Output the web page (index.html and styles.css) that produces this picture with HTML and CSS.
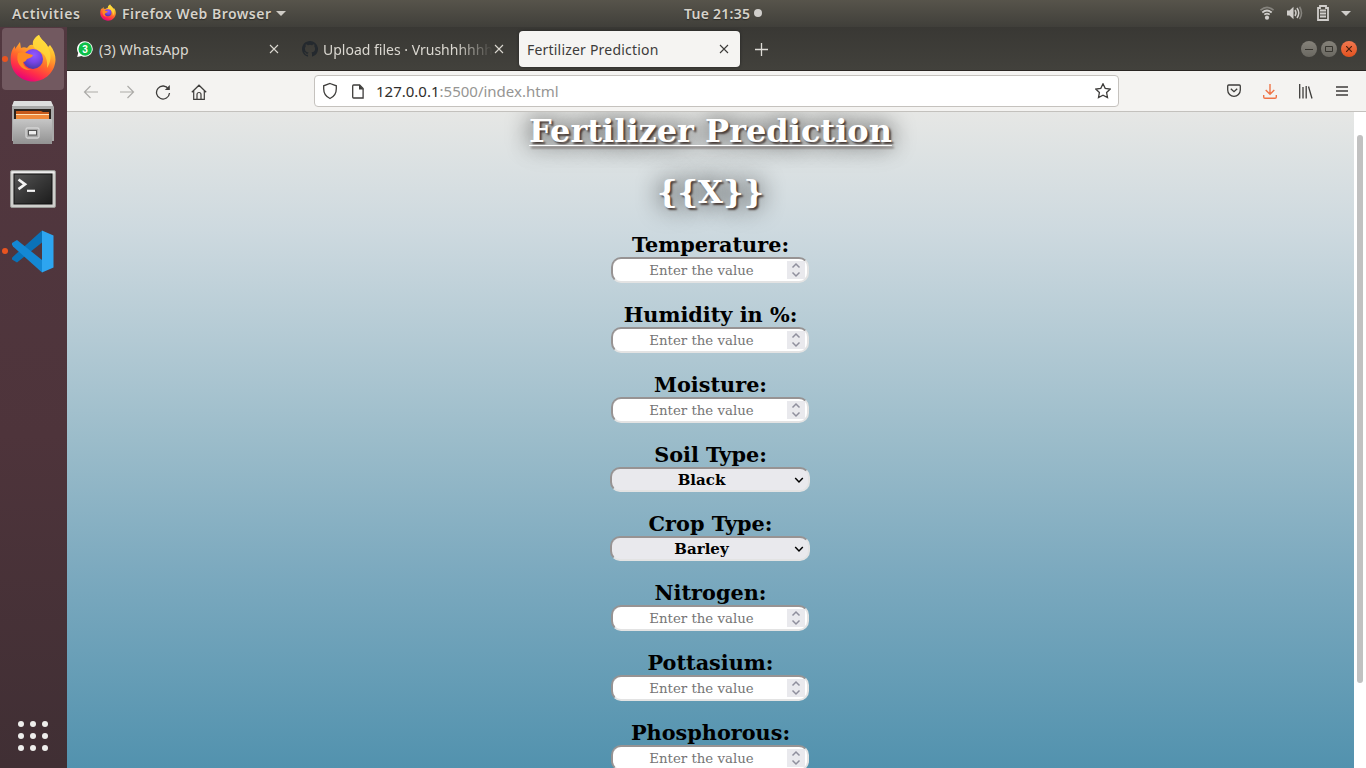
FILE: index.html
```html
<!DOCTYPE html>
<html lang="en">
<head>
<meta charset="utf-8">
<title>Fertilizer Prediction</title>
<link rel="stylesheet" href="styles.css">
</head>
<body>
<svg width="0" height="0" class="defs">
  <defs>
    <linearGradient id="fire" x1=".8" y1="0" x2=".35" y2="1"><stop offset="0" stop-color="#fff44f"/><stop offset=".3" stop-color="#ffbd2e"/><stop offset=".58" stop-color="#ff6a2b"/><stop offset=".8" stop-color="#ff2d4a"/><stop offset="1" stop-color="#e5007c"/></linearGradient>
    <radialGradient id="globe" cx=".55" cy=".3" r=".7"><stop offset="0" stop-color="#9059ff"/><stop offset=".5" stop-color="#7a45e8"/><stop offset="1" stop-color="#4b3aa8"/></radialGradient>
    <linearGradient id="metal" x1="0" y1="0" x2="0" y2="1"><stop offset="0" stop-color="#c6c6c6"/><stop offset="1" stop-color="#929292"/></linearGradient>
    <linearGradient id="screen" x1="0" y1="0" x2="1" y2="1"><stop offset="0" stop-color="#555"/><stop offset=".5" stop-color="#373737"/><stop offset="1" stop-color="#1c1c1c"/></linearGradient>
    <symbol id="firefox" viewBox="0 0 46 48">
      <path fill="url(#fire)" d="M29 1c2 5 7 7 9 12l2-2c4 5 5.500 10 5.500 15C45 38 35 47.500 23 47.500S.7 38 .7 25.500C.7 19 2 15 5 12v3l5-7 1 6c2-1 4-1 6 0 2-3 4-4 6-3-1-4 2-8 6-10z"/>
      <path fill="#ffd93b" opacity=".8" d="M29 1c2 5 7 7 9 12 4 8 3 15-1 21 1-9-2-14-8-17-4-2-6-4-6-7 0-4 3-7 6-9z"/>
      <circle cx="23" cy="25" r="10" fill="url(#globe)"/>
      <path fill="#ff8a22" d="M8 19c3-1 6-1 8 0 2 1 4 1 7 2-1 3-4 3-6 4-1 2-2 3-4 3 0 4 4 7 8 8-9 1-16-7-13-17z"/>
    </symbol>
    <symbol id="cross" viewBox="0 0 10 10"><path d="M1 1l8 8M9 1L1 9" fill="none" stroke="currentColor" stroke-width="1.100"/></symbol>
    <symbol id="spin" viewBox="0 0 18 18"><path d="M5.500 6.500L9 3l3.500 3.500M5.500 11.500L9 15l3.500-3.500" fill="none" stroke="#8f8f9d" stroke-width="1.500"/></symbol>
    <symbol id="chev" viewBox="0 0 10 8"><path d="M1.200 2L5 5.900 8.800 2" fill="none" stroke="#000" stroke-width="1.500"/></symbol>
  </defs>
</svg>

<header class="topbar">
  <span class="activities">Activities</span>
  <svg class="app-icon" width="16" height="17"><use href="#firefox"/></svg>
  <span class="app-name">Firefox Web Browser</span>
  <svg class="app-arrow" width="10" height="5"><path d="M0 0h10L5 5z" fill="#cfccc6"/></svg>
  <span class="clock">Tue 21:35</span>
  <i class="notice"></i>
  <div class="tray">
    <svg width="14" height="14" viewBox="0 0 14 14"><g fill="none" stroke-width="1.700"><path d="M.5 4.200Q7-1.500 13.500 4.200" stroke="#85837d"/><path d="M2.300 6.500Q7 2.500 11.700 6.500M4.300 8.600Q7 6.500 9.700 8.600" stroke="#d0cecb"/></g><circle cx="7" cy="11.700" r="2.100" fill="#d0cecb"/></svg>
    <svg width="16" height="14" viewBox="0 0 16 14"><path d="M0 4.500h2.500L6.500.8v12.400L2.500 9.500H0z" fill="#d0cecb"/><path d="M8 4q2 3 0 6M10 2q3.500 5 0 10" fill="none" stroke="#d0cecb" stroke-width="1.500"/><path d="M12.500.8q4 6 0 12.400" fill="none" stroke="#85837d" stroke-width="1.600"/></svg>
    <svg width="12" height="16" viewBox="0 0 12 16"><path d="M1 3h2V1h6v2h2v12H1z" fill="none" stroke="#d0cecb" stroke-width="1.800"/><path d="M3 5.500h6M3 8.500h6M3 11.500h6" stroke="#d0cecb" stroke-width="1.800"/></svg>
    <svg width="10" height="5"><path d="M0 0h10L5 5z" fill="#d0cecb"/></svg>
  </div>
</header>

<div class="desktop">
  <nav class="dock">
    <div class="launcher active running"><svg width="46" height="48"><use href="#firefox"/></svg></div>
    <div class="launcher files">
      <svg width="44" height="44" viewBox="0 0 44 44"><path d="M3 0h37l3 6v34h-2v3H2v-3H1V6z" fill="#a9a9a9"/><path d="M3 0h37l2 5H1z" fill="#dedede"/><path d="M3 8h37v11H3z" fill="#29231f"/><path d="M5 10h25l2 1h6v8H5z" fill="#c65a1c"/><path d="M5 14h33v5H5z" fill="#ef8a3c"/><path d="M5 13.500h33" stroke="#ffe3bb" stroke-width="1.200"/><rect x="2" y="18" width="39" height="25" rx="1" fill="url(#metal)"/><rect x="15" y="27" width="13" height="10" rx="1.500" fill="#a7a7a7" stroke="#d4d4d4" stroke-width="1.300"/><rect x="17.500" y="29.500" width="8" height="4.500" fill="#eee" stroke="#555"/></svg>
    </div>
    <div class="launcher terminal">
      <svg width="46" height="38" viewBox="0 0 46 38"><rect x=".5" y=".5" width="45" height="37" rx="1.500" fill="#cfcfcc" stroke="#999996"/><rect x="1.500" y="1.500" width="43" height="2" fill="#eee"/><rect x="4" y="4" width="38" height="30" fill="url(#screen)" stroke="#111"/><path d="M8.500 9.500l6.500 4.800-6.500 4.800" fill="none" stroke="#f4f4f4" stroke-width="2.700"/><path d="M17 20.800h8" stroke="#f4f4f4" stroke-width="2.200"/></svg>
    </div>
    <div class="launcher code running">
      <svg width="44" height="43" viewBox="0 0 44 43"><path d="M1 28.500Q1 27.500 2 26.700L31 .5v12L6 32.500 1 29.500z" fill="#0a72b8"/><path d="M1 14.500V13l5-3 25 20v12.500L2 16.500z" fill="#1488d4"/><path d="M31 .5l11.500 5v32L31 42.500z" fill="#2da5f0"/></svg>
    </div>
    <div class="apps-grid"><i></i><i></i><i></i><i></i><i></i><i></i><i></i><i></i><i></i></div>
  </nav>

  <main class="browser">
    <div class="tabs">
      <div class="tab first">
        <svg width="16" height="16" viewBox="0 0 16 16"><path d="M8 .2a7.800 7.800 0 1 1-3.500 14.800L.2 16l1-4A7.800 7.800 0 0 1 8 .2z" fill="#fff"/><circle cx="8.200" cy="8" r="6.700" fill="#0dbf49"/><text x="8.100" y="11.500" text-anchor="middle" class="badge">3</text></svg>
        <span class="t-wa">(3) WhatsApp</span>
        <svg class="x" width="10" height="10"><use href="#cross"/></svg>
      </div>
      <div class="tab second">
        <svg width="16" height="16" viewBox="0 0 16 16"><path fill="#24292e" d="M8 0C3.580 0 0 3.580 0 8c0 3.540 2.290 6.530 5.470 7.590.4.070.55-.17.55-.38v-1.490c-2.230.48-2.700-.95-2.700-.95-.36-.92-.89-1.170-.89-1.170-.73-.5.060-.49.060-.49.8.060 1.230.83 1.230.83.72 1.220 1.870.87 2.330.66.070-.52.280-.87.510-1.070-1.780-.2-3.640-.89-3.640-3.950 0-.87.310-1.590.820-2.150-.08-.2-.36-1.020.08-2.120 0 0 .67-.21 2.200.82a7.600 7.600 0 0 1 4 0c1.530-1.040 2.200-.82 2.200-.82.44 1.100.16 1.920.08 2.120.51.560.82 1.270.82 2.150 0 3.070-1.870 3.750-3.650 3.950.29.250.54.730.54 1.480v2.200c0 .21.150.46.550.38A8 8 0 0 0 8 0z"/></svg>
        <span class="t-gh">Upload files · Vrushhhhhh</span>
        <svg class="x" width="10" height="10"><use href="#cross"/></svg>
      </div>
      <div class="tab current">
        <span class="t-fp">Fertilizer Prediction</span>
        <svg class="x" width="10" height="10"><use href="#cross"/></svg>
      </div>
      <svg class="new-tab" width="13" height="13"><path d="M6.500 0v13M0 6.500h13" stroke="#dedcd7" stroke-width="1.300"/></svg>
      <div class="win-buttons">
        <i><svg width="8" height="8"><path d="M0 4.500h8" stroke="#37352f"/></svg></i>
        <i><svg width="8" height="6"><path d="M.5.5h7v5h-7z" fill="none" stroke="#37352f"/></svg></i>
        <i class="close"><svg width="6" height="6"><path d="M0 0l6 6M6 0L0 6" stroke="#4a2110" stroke-width="1.200"/></svg></i>
      </div>
    </div>

    <div class="toolbar">
      <div class="nav-icons">
        <svg width="16" height="16" class="dim"><path d="M15 8H1.500M7.500 2L1.500 8l6 6"/></svg>
        <svg width="16" height="16" class="dim"><path d="M1 8h13.500M8.500 2l6 6-6 6"/></svg>
        <svg width="16" height="16"><path d="M13.500 5A6.500 6.500 0 1 0 14.500 9" stroke-width="1.300"/><path d="M14.800 1v5H9.800z" fill="#3e3d3b" stroke="none"/></svg>
        <svg width="16" height="16"><path d="M.8 8.200L8 1.200l7.200 7M2.700 6.800v8.500h10.600V6.800M6 15v-4.500a2 2 0 0 1 4 0V15" stroke-width="1.200"/></svg>
      </div>
      <div class="url">
        <svg width="16" height="18" viewBox="0 0 16 18"><path d="M8 1.500l6.300 2.300v3C14.300 12 11.500 15 8 16.500 4.500 15 1.700 12 1.700 6.800v-3z" stroke-width="1.300"/></svg>
        <svg class="page-icon" width="12" height="15"><path d="M1.600 1h6l3.500 3.500V14H1.600q-.9 0-.9-.9V2q0-1 .9-1z" stroke-width="1.300"/><path d="M7 1v4.500h4.500L7.500 1z" fill="#3e3d3b" stroke="none"/></svg>
        <span class="address"><b>127.0.0.1</b>:5500/index.html</span>
        <svg class="star" width="16" height="16"><path d="M8 .8l2.200 4.500 5 .7-3.600 3.500.9 5L8 12.200l-4.500 2.300.9-5L.8 6l5-.7z" stroke-width="1.300"/></svg>
      </div>
      <div class="actions">
        <svg width="14" height="14"><path d="M1.700 1h10.600q1 0 1 1v4a6.300 6.300 0 0 1-12.600 0V2q0-1 1-1zM3.800 4.700L7 7.700l3.200-3" stroke-width="1.300"/></svg>
        <svg width="14" height="15" class="download"><path d="M7 0v10.300M2.700 6L7 10.300 11.300 6M.7 11v2q0 1.300 1.300 1.300h10q1.300 0 1.300-1.300v-2" stroke-width="1.400"/></svg>
        <svg width="14" height="15"><path d="M.7 0v14.500M4 3v11.500M7.200 2v12.500M9.500 2.500l3.500 12" stroke-width="1.300"/></svg>
        <svg width="12" height="10"><path d="M0 1h12M0 5h12M0 9h12" stroke-width="1.300"/></svg>
      </div>
    </div>

    <div class="viewport">
      <form class="page">
        <h1 class="title">Fertilizer Prediction</h1>
        <h1 class="result">{{X}}</h1>
        <div class="field"><label>Temperature:</label><div class="number"><input type="text" placeholder="Enter the value"><svg width="18" height="18"><use href="#spin"/></svg></div></div>
        <div class="field"><label>Humidity in %:</label><div class="number"><input type="text" placeholder="Enter the value"><svg width="18" height="18"><use href="#spin"/></svg></div></div>
        <div class="field"><label>Moisture:</label><div class="number"><input type="text" placeholder="Enter the value"><svg width="18" height="18"><use href="#spin"/></svg></div></div>
        <div class="field short"><label>Soil Type:</label><div class="select"><span>Black</span><svg width="10" height="8"><use href="#chev"/></svg></div></div>
        <div class="field short"><label>Crop Type:</label><div class="select"><span>Barley</span><svg width="10" height="8"><use href="#chev"/></svg></div></div>
        <div class="field"><label>Nitrogen:</label><div class="number"><input type="text" placeholder="Enter the value"><svg width="18" height="18"><use href="#spin"/></svg></div></div>
        <div class="field"><label>Pottasium:</label><div class="number"><input type="text" placeholder="Enter the value"><svg width="18" height="18"><use href="#spin"/></svg></div></div>
        <div class="field"><label>Phosphorous:</label><div class="number"><input type="text" placeholder="Enter the value"><svg width="18" height="18"><use href="#spin"/></svg></div></div>
      </form>
      <div class="scrollbar"><div class="thumb"></div></div>
    </div>
  </main>
</div>
</body>
</html>
```

FILE: styles.css
```css
* { box-sizing: border-box; }
body { margin: 0; width: 1366px; height: 768px; overflow: hidden; display: flex; flex-direction: column; font-family: "Noto Sans", "Open Sans", sans-serif; font-size: 14px; }
svg { display: block; flex: none; }
.defs { position: absolute; }

.topbar { flex: none; height: 27px; display: flex; align-items: center; padding: 0 15px 0 12px; background: linear-gradient(#57544b, #403f3a); color: #d6d2ca; font-weight: 600; white-space: nowrap; text-shadow: 0 1px 1px #2a2925; }
.activities { width: 88px; letter-spacing: .6px; }
.app-icon { margin-bottom: 2px; }
.app-name { width: 155px; margin-left: 6px; letter-spacing: .48px; }
.app-arrow { margin-left: -1px; }
.clock { margin-left: 398px; width: 67px; letter-spacing: .25px; margin-top: -1px; }
.notice { width: 8px; height: 8px; margin: -1px 0 0 3px; border-radius: 50%; background: #d0cecb; }
.tray { margin-left: auto; display: flex; align-items: center; gap: 12px; margin-top: -1px; }
.tray svg:nth-child(1) { margin-right: 1px; }
.tray svg:nth-child(2) { margin-right: 2px; }

.desktop { flex: 1; min-height: 0; display: flex; }
.dock { flex: none; width: 67px; display: flex; flex-direction: column; padding: 1px 3px 17px 2px; background: linear-gradient(#523840, #4e343b 55%, #402f34); }
.launcher { flex: none; height: 62px; margin-bottom: 3px; display: flex; align-items: center; justify-content: center; position: relative; }
.active { background: #725960; border-radius: 4px; }
.active svg { margin-top: -2px; }
.running::before { content: ""; position: absolute; left: 0; top: 28px; width: 6px; height: 6px; border-radius: 50%; background: #e95420; }
.files { height: 61px; }
.files svg { margin-top: -2px; }
.terminal { padding-top: 1px; }
.code { padding-top: 0; }
.code svg { margin-top: -3px; }
.code.running::before { top: 26px; }
.apps-grid { margin-top: auto; margin-left: 16px; display: grid; grid-template-columns: repeat(3, 6px); gap: 6px; }
.apps-grid i { width: 6px; height: 6px; border-radius: 50%; background: #eeeeec; }

.browser { flex: 1; min-width: 0; display: flex; flex-direction: column; }
.tabs { flex: none; height: 44px; display: flex; align-items: center; padding: 4px 9px 4px 1px; background: linear-gradient(#393834, #42413c); border-bottom: 1px solid #292522; color: #dbd8d1; white-space: nowrap; }
.tab { height: 36px; display: flex; align-items: center; padding: 0 16px 0 9px; gap: 6px; }
.tab .x { margin-left: auto; }
.tab span { padding-top: 1px; }
.badge { font: bold 10px "Liberation Sans", sans-serif; fill: #fff; }
.first { width: 225px; padding-right: 14px; }
.second { width: 226px; padding-right: 16px; gap: 5px; }
.second .x { margin-left: -4px; }
.t-wa { letter-spacing: .2px; }
.t-gh { letter-spacing: 0; mask-image: linear-gradient(90deg, #000 78%, transparent); -webkit-mask-image: linear-gradient(90deg, #000 78%, transparent); }
.t-fp { letter-spacing: .2px; }
.current { width: 221px; padding: 0 11px 0 8px; background: #f5f4f2; color: #3d3c3a; border-radius: 4px; box-shadow: 0 0 3px #222; }
.new-tab { margin-left: 15px; margin-top: 1px; }
.win-buttons { margin-left: auto; display: flex; gap: 4px; }
.win-buttons i { width: 16px; height: 16px; border-radius: 50%; display: flex; align-items: center; justify-content: center; background: linear-gradient(#85827a, #6a6861); }
.win-buttons .close { background: linear-gradient(#f27850, #e2521f); }

.toolbar { flex: none; height: 41px; display: flex; align-items: center; padding: 0 18px 0 16px; background: #f4f3f1; border-bottom: 1px solid #c3c1bd; }
.toolbar svg { fill: none; stroke: #3e3d3b; stroke-width: 1.2; }
.nav-icons { display: flex; gap: 20px; width: 231px; margin-top: 1px; }
.toolbar .dim { stroke: #acaba8; }
.url { width: 805px; height: 32px; display: flex; align-items: center; padding: 0 7px; background: #fff; border: 1px solid #c5c2be; border-radius: 4px; }
.page-icon { margin-left: 14px; }
.address { margin-left: 12px; font-size: 15px; color: #969593; }
.address b { font-weight: 400; color: #2f2e2c; }
.star { margin-left: auto; }
.actions { margin-left: auto; display: flex; align-items: center; gap: 22px; }
.actions svg:last-child { margin-left: 1px; }
.toolbar .download { stroke: #ef7447; }

.viewport { flex: 1; min-height: 0; display: flex; overflow: hidden; }
.page { flex: 1; display: flex; flex-direction: column; align-items: center; font-family: "DejaVu Serif", serif; background: linear-gradient(#e6e7e5 0, #cdd9df 120px, #9bbcca 328px, #7daabf 455px, #5292ae 656px); overflow: hidden; }
h1 { margin: 0; flex: none; font-size: 32px; line-height: 38px; color: #fff; text-shadow: 2px 2px 2px #4a3d38, 0 0 25px #000; }
.title { text-decoration: underline; text-decoration-thickness: 1px; text-underline-offset: 3px; }
.result { margin: 23px 0 21px; }
.field { flex: none; height: 70px; display: flex; flex-direction: column; align-items: center; }
.field.short { height: 69px; }
label { height: 25px; line-height: 25px; font-size: 20.8px; font-weight: 700; color: #000; }
.number { width: 198px; height: 26px; display: flex; align-items: center; margin-right: 1px; padding: 0 2px; background: #fff; border: 2px solid; border-color: #979393 #e3e3e3 #e3e3e3 #979393; border-radius: 10px; }
.number input { width: 172px; height: 20px; padding: 0 0 0 1px; border: 0; outline: 0; background: none; text-align: center; font: 13.333px "DejaVu Serif", serif; }
.number input::placeholder { color: #757575; }
.number svg { background: #e9e9ed; }
.select { width: 200px; height: 25px; display: flex; align-items: center; margin-right: 1px; padding: 0 4px 0 0; background: #e9e9ed; border: 2px solid; border-color: #979393 #e3e3e3 #e3e3e3 #979393; border-radius: 10px; font-size: 15px; font-weight: 700; }
.select span { flex: 1; text-align: center; padding-right: 3px; }
.scrollbar { flex: none; width: 12px; padding: 23px 3px 0; background: #fff; }
.thumb { width: 6px; height: 548px; border-radius: 3px; background: #c1c1c1; }
```
